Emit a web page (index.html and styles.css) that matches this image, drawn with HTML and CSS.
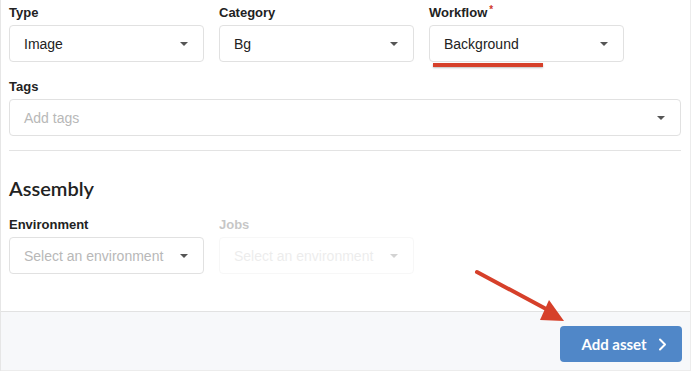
FILE: index.html
```html
<!DOCTYPE html>
<html lang="en">
<head>
    <meta charset="UTF-8">
    <meta name="viewport" content="width=device-width, initial-scale=1.0">
    <title>New asset</title>
    <link rel="stylesheet" href="styles.css">
</head>
<body>
    <div class="modal">
        <div class="content">
            <div class="row">
                <div class="field">
                    <label class="label">Type</label>
                    <div class="select">
                        <span class="value">Image</span>
                        <span class="caret"></span>
                    </div>
                </div>
                <div class="field">
                    <label class="label">Category</label>
                    <div class="select">
                        <span class="value">Bg</span>
                        <span class="caret"></span>
                    </div>
                </div>
                <div class="field workflow">
                    <label class="label">Workflow<span class="required">*</span></label>
                    <div class="select">
                        <span class="value">Background</span>
                        <span class="caret"></span>
                    </div>
                    <!-- annotation -->
                    <div class="underline"></div>
                </div>
            </div>

            <div class="field tags">
                <label class="label">Tags</label>
                <div class="select wide">
                    <span class="placeholder">Add tags</span>
                    <span class="caret"></span>
                </div>
            </div>

            <hr class="divider">

            <h2 class="section-title">Assembly</h2>

            <div class="row">
                <div class="field">
                    <label class="label">Environment</label>
                    <div class="select">
                        <span class="placeholder">Select an environment</span>
                        <span class="caret"></span>
                    </div>
                </div>
                <div class="field disabled">
                    <label class="label">Jobs</label>
                    <div class="select">
                        <span class="placeholder">Select an environment</span>
                        <span class="caret"></span>
                    </div>
                </div>
            </div>
        </div>

        <div class="footer">
            <button class="primary">Add asset
                <svg width="9" height="13" viewBox="0 0 9 13"><path d="M2 1.5 L7 6.5 L2 11.5" fill="none" stroke="#fff" stroke-width="2" stroke-linecap="round" stroke-linejoin="round"/></svg>
            </button>
        </div>

        <!-- annotation arrow -->
        <svg class="arrow" width="691" height="371" viewBox="0 0 691 371">
            <line x1="477" y1="272" x2="548" y2="310" stroke="#d6402a" stroke-width="4" stroke-linecap="round"/>
            <polygon points="549,300 540,320 564,321" fill="#d6402a"/>
        </svg>
    </div>
</body>
</html>
```

FILE: styles.css
```css
body {
    margin: 0;
    padding: 0;
    background: #fff;
    font-family: "Liberation Sans", Arial, sans-serif;
    color: #222;
}

.modal {
    position: relative;
    height: 371px;
    box-sizing: border-box;
    border-left: 1px solid #e6e6e6;
    border-right: 1px solid #ececec;
    display: flex;
    flex-direction: column;
}

.content {
    padding: 5px 9px 0 8px;
    flex: 1;
}

.row {
    display: flex;
    gap: 15px;
}

.field {
    position: relative;
    width: 195px;
}

.label {
    display: block;
    font-size: 13px;
    font-weight: bold;
    line-height: 16px;
    margin-bottom: 4px;
    color: #222;
}

.required {
    color: #d0392b;
    font-size: 10px;
    vertical-align: top;
    margin-left: 2px;
    position: relative;
    top: -3px;
}

.select {
    height: 37px;
    box-sizing: border-box;
    border: 1px solid #e1e1e1;
    border-radius: 4px;
    padding: 0 14px;
    display: flex;
    align-items: center;
    justify-content: space-between;
    font-size: 14px;
    background: #fff;
}

.value {
    color: #222;
}

.placeholder {
    color: #b8b8b8;
}

.caret {
    width: 0;
    height: 0;
    border-left: 4px solid transparent;
    border-right: 4px solid transparent;
    border-top: 4px solid #555;
    margin-right: 1px;
}

.tags {
    width: auto;
    margin-top: 17px;
}

.divider {
    border: none;
    border-top: 1px solid #e3e3e3;
    margin: 14px 0 0 0;
}

.section-title {
    font-family: Lato, "Liberation Sans", sans-serif;
    font-size: 20px;
    font-weight: 600;
    line-height: 24px;
    margin: 25px 0 17px 0;
    color: #222;
}

.disabled {
    opacity: 0.25;
}

.footer {
    border-top: 1px solid #e2e2e2;
    border-bottom: 1px solid #ececec;
    background: #f7f8fa;
    height: 60px;
    box-sizing: border-box;
    padding: 14px 8px 0 0;
    display: flex;
    justify-content: flex-end;
    align-items: flex-start;
}

.primary {
    background: #5087c8;
    color: #fff;
    border: none;
    border-radius: 4px;
    height: 36px;
    width: 122px;
    padding: 0 0 0 6px;
    font-family: Lato, "Liberation Sans", sans-serif;
    font-size: 15px;
    font-weight: bold;
    display: flex;
    align-items: center;
    justify-content: center;
    gap: 11px;
    cursor: pointer;
}

.underline {
    position: absolute;
    left: 4px;
    top: 58px;
    width: 110px;
    height: 4px;
    background: #d6402a;
    box-shadow: 0 1px 2px rgba(0, 0, 0, 0.25);
}

.arrow {
    position: absolute;
    left: -1px;
    top: 0;
    pointer-events: none;
}
```
